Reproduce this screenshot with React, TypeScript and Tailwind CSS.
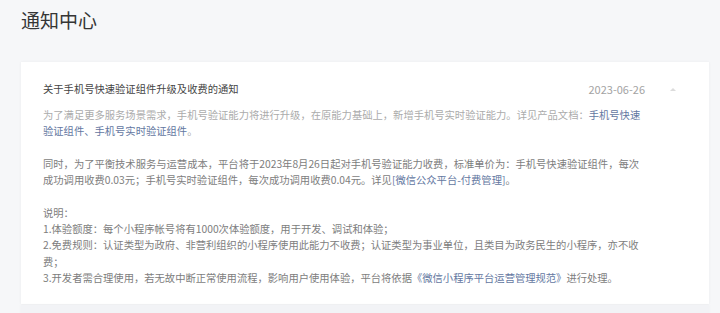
import React from 'react';

const font = { fontFamily: '"Noto Sans CJK SC", "Noto Sans", sans-serif' };

function Link({ children }: { children: React.ReactNode }) {
  return <span className="text-[#6377a1]">{children}</span>;
}

function NoticeCard() {
  return (
    <div className="bg-white pl-[22px] pr-[8px] pt-[19px] pb-[18px] shadow-[0_0_3px_rgba(0,0,0,0.05)]">
      <div className="flex items-center h-[16px]">
        <div className="flex-1 text-[10.3px] text-[#444] leading-[16px]">关于手机号快速验证组件升级及收费的通知</div>
        <div className="text-[11px] text-[#a3a3a3] leading-[16px]">2023-06-26</div>
        <div className="w-[56px] flex justify-center items-center">
          <span className="block w-0 h-0 border-l-[3px] border-r-[3px] border-b-[3px] border-l-transparent border-r-transparent border-b-[#dcdcdc]" />
        </div>
      </div>
      <div className="w-[602px] mt-[10px] text-[10.3px] leading-[16.3px]">
        <p className="text-[#ababab]">
          为了满足更多服务场景需求，手机号验证能力将进行升级，在原能力基础上，新增手机号实时验证能力。详见产品文档：
          <Link>手机号快速验证组件、手机号实时验证组件</Link>。
        </p>
        <div className="text-[#7d7d7d]">
          <p className="mt-[16.3px]">
            同时，为了平衡技术服务与运营成本，平台将于2023年8月26日起对手机号验证能力收费，标准单价为：手机号快速验证组件，每次成功调用收费0.03元；手机号实时验证组件，每次成功调用收费0.04元。详见
            <Link>[微信公众平台-付费管理]</Link>。
          </p>
          <p className="mt-[16.3px]">说明：</p>
          <p>1.体验额度：每个小程序帐号将有1000次体验额度，用于开发、调试和体验；</p>
          <p>2.免费规则：认证类型为政府、非营利组织的小程序使用此能力不收费；认证类型为事业单位，且类目为政务民生的小程序，亦不收费；</p>
          <p>
            3.开发者需合理使用，若无故中断正常使用流程，影响用户使用体验，平台将依据
            <Link>《微信小程序平台运营管理规范》</Link>进行处理。
          </p>
        </div>
      </div>
    </div>
  );
}

export default function App() {
  return (
    <div className="w-[720px] h-[313px] overflow-hidden bg-[#f6f7f9]" style={font}>
      <div className="pl-[21px] pr-[11px] pt-[6px]">
        <h1 className="text-[19px] leading-[28px] text-[#353535] font-normal">通知中心</h1>
        <div className="mt-[28px]">
          <NoticeCard />
          <div className="mt-[1px] h-[40px] bg-[#f2f3f6] shadow-[0_0_3px_rgba(0,0,0,0.04)]" />
        </div>
      </div>
    </div>
  );
}
